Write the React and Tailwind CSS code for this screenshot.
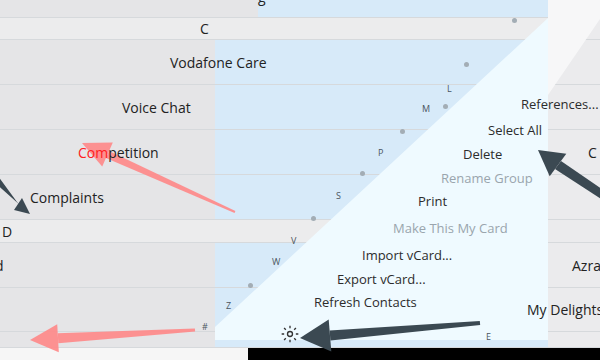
const rows = [
  { h: 18, label: "g", pl: 258, top: true },
  { h: 22, label: "C", pl: 200, section: true },
  { h: 45, label: "Vodafone Care", pl: 170 },
  { h: 45, label: "Voice Chat", pl: 122 },
  { h: 45, label: "Competition", pl: 78, red: true, right: "C", rpl: 40 },
  { h: 45, label: "Complaints", pl: 30 },
  { h: 23, label: "D", pl: 2, section: true },
  { h: 45, label: "Azrad", pl: 0, ml: -34, right: "Azrad", rpl: 24 },
  { h: 44, label: "Contacts", pl: 0, ml: -58, mid: "My Delights", mpl: 312 },
  { h: 16, label: "", pl: 0 },
];

const menu = [
  { label: "References...", ml: 306, h: 29 },
  { label: "Select All", ml: 273, h: 24 },
  { label: "Delete", ml: 248, h: 24 },
  { label: "Rename Group", ml: 226, h: 23, dim: true },
  { label: "Print", ml: 203, h: 24 },
  { label: "Make This My Card", ml: 178, h: 30, dim: true },
  { label: "Import vCard...", ml: 147, h: 24 },
  { label: "Export vCard...", ml: 122, h: 23 },
  { label: "Refresh Contacts", ml: 99, h: 24 },
];

// index letters and dots sit on the diagonal, like pins on a canvas
const letters = [
  ["L", 447, 82],
  ["M", 422, 102],
  ["P", 378, 146],
  ["S", 336, 189],
  ["V", 291, 234],
  ["W", 272, 255],
  ["Z", 226, 299],
  ["#", 202, 320],
  ["E", 486, 330],
];

const dots = [
  [514, 20],
  [466, 64],
  [402, 131],
  [362, 173],
  [313, 218],
  [250, 285],
  [445, 106],
];

export default function App() {
  return (
    <div
      className="relative w-[600px] h-[360px] overflow-hidden bg-[#e6e6e8] text-[#222]"
      style={{ fontFamily: '"Open Sans", "Liberation Sans", sans-serif' }}
    >
      {/* list rows */}
      <div className="flex flex-col">
        {rows.map((r, i) => (
          <div key={i} className="flex border-b border-[#d6d9dc] text-[14px]" style={{ height: r.h }}>
            <div
              className={`w-[215px] shrink-0 flex ${r.top ? "items-start" : "items-center"} ${r.section ? "bg-[#ececed]" : "bg-[#e5e5e7]"}`}
              style={{ paddingLeft: r.pl }}
            >
              <span
                className={`relative z-10 whitespace-nowrap ${r.top ? "-mt-[14px]" : ""}`}
                style={{ marginLeft: r.ml || 0 }}
              >
                {r.red ? (
                  <>
                    <span className="text-[#ff2020]">Com</span>petition
                  </>
                ) : (
                  r.label
                )}
              </span>
            </div>
            <div
              className={`w-[333px] shrink-0 flex items-center ${r.section ? "bg-[#ececed]" : "bg-[#d7eaf9]"}`}
              style={{ paddingLeft: r.mpl || 0 }}
            >
              {r.mid && <span className="relative z-10 whitespace-nowrap">{r.mid}</span>}
            </div>
            <div className="flex-1 flex items-center bg-[#ebebed]" style={{ paddingLeft: r.rpl || 0 }}>
              {r.right && <span className="relative z-10 whitespace-nowrap">{r.right}</span>}
            </div>
          </div>
        ))}
      </div>
      <div className="flex h-[12px]">
        <div className="w-[248px] bg-[#f6f6f6]" />
        <div className="flex-1 bg-black" />
      </div>

      {/* top right white corner */}
      <div className="absolute left-[548px] top-0 w-[52px] h-[95px] bg-[#f7f7f8] [clip-path:polygon(0_0,100%_0,100%_20%,0_100%)]" />

      {/* context menu */}
      <div className="absolute left-[215px] top-[18px] w-[333px] h-[322px] bg-[#effaff] [clip-path:polygon(100%_0,100%_100%,0_100%,0_96%)]" />
      <div className="absolute left-[215px] top-[90px] w-[333px] flex flex-col text-[13px]">
        {menu.map((m, i) => (
          <div
            key={i}
            className={`flex items-center whitespace-nowrap ${m.dim ? "text-[#9aa5ad]" : "text-[#2c2c2c]"}`}
            style={{ height: m.h, paddingLeft: m.ml }}
          >
            {m.label}
          </div>
        ))}
      </div>

      {letters.map(([l, x, y]) => (
        <span key={l} className="absolute text-[9px] text-[#4a5560]" style={{ left: x, top: y }}>
          {l}
        </span>
      ))}
      {dots.map(([x, y], i) => (
        <span
          key={i}
          className="absolute w-[5px] h-[5px] rounded-full bg-[#a3adb5]"
          style={{ left: x - 2, top: y - 2 }}
        />
      ))}

      {/* gear */}
      <svg className="absolute left-[280px] top-[324px]" width="20" height="20" viewBox="0 0 24 24" fill="none" stroke="#333" strokeWidth="1.6">
        <circle cx="12" cy="12" r="3" />
        <path d="M12 2v3M12 19v3M2 12h3M19 12h3M4.9 4.9l2.1 2.1M17 17l2.1 2.1M4.9 19.1 7 17M17 7l2.1-2.1" />
      </svg>

      {/* arrows */}
      <svg className="absolute inset-0 pointer-events-none" width="600" height="360">
        <g fill="#ff8a8a" opacity="0.92">
          <polygon points="82,143 112.8,142.6 102.2,166.4" />
          <polygon points="109.1,150.9 105.9,158.1 234.6,212.9 235.4,211.1" />
          <polygon points="30,340 58.8,352.3 57.2,324.3" />
          <polygon points="58.3,343.3 57.7,333.3 194.9,328.5 195.1,331.5" />
        </g>
        <g fill="#3b4952">
          <polygon points="538,150 566.3,153.7 549.7,176.3" />
          <polygon points="561,161 555,169 612,206 618,200" />
          <polygon points="300,338 331.3,351.5 328.7,319.5" />
          <polygon points="330.4,340.5 329.6,330.5 479.8,321 480.2,325" />
          <polygon points="30,214 14,210 22,198" />
          <polygon points="17,202 21,206 -6,182 -2,176" />
        </g>
      </svg>
    </div>
  );
}
